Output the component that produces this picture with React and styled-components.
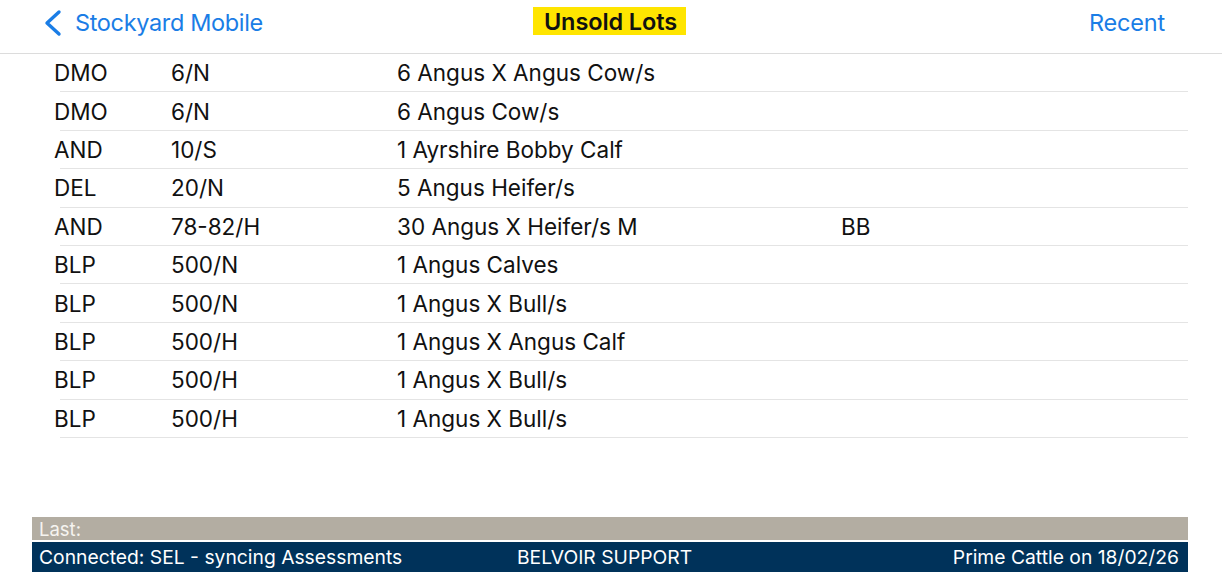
import React from 'react';
import styled, { createGlobalStyle } from 'styled-components';

const GlobalStyle = createGlobalStyle`
	html, body {
		margin: 0;
		padding: 0;
		background: #ffffff;
	}
	body {
		font-family: Inter, 'Noto Sans', sans-serif;
		-webkit-font-smoothing: antialiased;
	}
`;

const Screen = styled.div`
	width: 1222px;
	height: 577px;
	display: flex;
	flex-direction: column;
	overflow: hidden;
`;

const Header = styled.header`
	height: 53px;
	border-bottom: 1px solid #dcdcdc;
	display: grid;
	grid-template-columns: 1fr auto 1fr;
	align-items: center;
	padding: 0 57px;
	flex-shrink: 0;
`;

const BackButton = styled.div`
	display: flex;
	align-items: center;
	gap: 11px;
	margin-left: -15px;
	color: #1a7de6;
	font-size: 23.5px;
	letter-spacing: -0.35px;
	margin-top: -8px;
`;

const Title = styled.div`
	font-size: 23.5px;
	font-weight: 600;
	color: #111;
	background: #ffe500;
	padding: 0 9px 0 11px;
	height: 28px;
	line-height: 29px;
	margin: -12px 0 0 -3px;
	letter-spacing: -0.1px;
`;

const RightAction = styled.div`
	justify-self: end;
	color: #1a7de6;
	font-size: 23.5px;
	letter-spacing: -0.2px;
	margin-top: -8px;
`;

const List = styled.div`
	flex: 1;
`;

const Row = styled.div`
	display: grid;
	grid-template-columns: 111px 226px 444px 1fr;
	align-items: center;
	height: 37.4px;
	margin: 0 34px 0 60px;
	border-bottom: 1px solid #e4e4e4;
	color: #111;
	font-size: 22.5px;
`;

const Cell = styled.div`
	white-space: nowrap;
	margin-left: ${(props) => (props.$first ? '-6px' : '0')};
`;

const Footer = styled.footer`
	margin: 0 34px 5px 32px;
	display: flex;
	flex-direction: column;
	gap: 2px;
`;

const LastBar = styled.div`
	height: 23px;
	background: #b3ada2;
	color: #f6f4f0;
	font-size: 18.5px;
	line-height: 24px;
	padding-left: 7px;
`;

const StatusBar = styled.div`
	height: 30px;
	background: #00325a;
	color: #ffffff;
	font-size: 19.3px;
	display: grid;
	grid-template-columns: 478px 1fr auto;
	align-items: center;
	padding: 0 9px 0 7px;
`;

const lots = [
	['DMO', '6/N', '6 Angus X Angus Cow/s', ''],
	['DMO', '6/N', '6 Angus Cow/s', ''],
	['AND', '10/S', '1 Ayrshire Bobby Calf', ''],
	['DEL', '20/N', '5 Angus Heifer/s', ''],
	['AND', '78-82/H', '30 Angus X Heifer/s M', 'BB'],
	['BLP', '500/N', '1 Angus Calves', ''],
	['BLP', '500/N', '1 Angus X Bull/s', ''],
	['BLP', '500/H', '1 Angus X Angus Calf', ''],
	['BLP', '500/H', '1 Angus X Bull/s', ''],
	['BLP', '500/H', '1 Angus X Bull/s', ''],
];

const Chevron = () => (
	<svg width="22" height="28" viewBox="0 0 22 28">
		<polyline
			points="17,3 5,14 17,25"
			fill="none"
			stroke="#1a7de6"
			strokeWidth="3.4"
			strokeLinecap="round"
			strokeLinejoin="round"
		/>
	</svg>
);

const App = () => {
	return (
		<>
			<GlobalStyle />
			<Screen>
				<Header>
					<BackButton>
						<Chevron />
						<span>Stockyard Mobile</span>
					</BackButton>
					<Title>Unsold Lots</Title>
					<RightAction>Recent</RightAction>
				</Header>
				<List>
					{lots.map((lot, i) => (
						<Row key={i}>
							<Cell $first>{lot[0]}</Cell>
							<Cell>{lot[1]}</Cell>
							<Cell>{lot[2]}</Cell>
							<Cell>{lot[3]}</Cell>
						</Row>
					))}
				</List>
				<Footer>
					<LastBar>Last:</LastBar>
					<StatusBar>
						<span>Connected: SEL - syncing Assessments</span>
						<span>BELVOIR SUPPORT</span>
						<span>Prime Cattle on 18/02/26</span>
					</StatusBar>
				</Footer>
			</Screen>
		</>
	);
};

export default App;
